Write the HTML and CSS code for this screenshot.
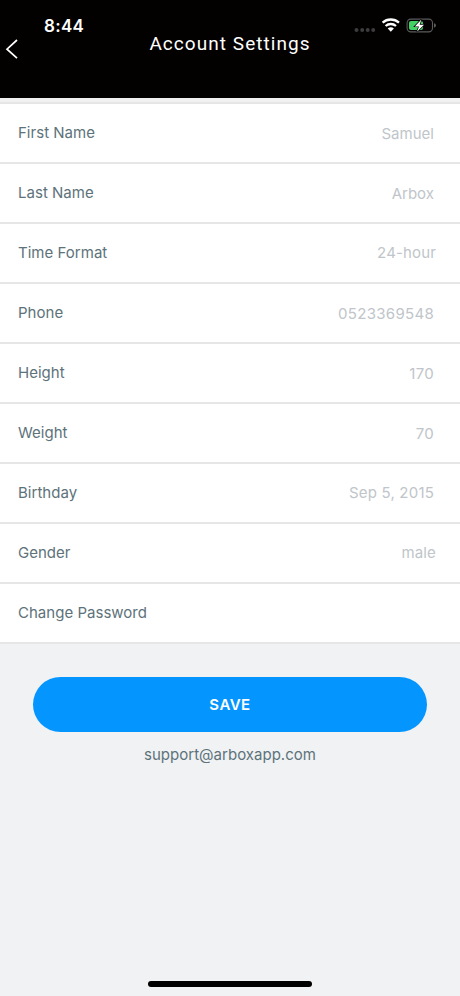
FILE: index.html
```html
<!DOCTYPE html>
<html lang="en">
<head>
<meta charset="utf-8">
<title>Account Settings</title>
<link rel="stylesheet" href="styles.css">
</head>
<body>
<header class="header">
  <div class="side">
    <time class="clock">8:44</time>
    <svg class="back" width="14" height="20" viewBox="0 0 14 20"><path d="M12 1 2 10.2 12 19.2" /></svg>
  </div>
  <h1 class="title">Account Settings</h1>
  <svg class="status" width="86" height="18" viewBox="0 0 86 18">
    <g fill="#3c3c3c"><circle cx="6.5" cy="13" r="2"/><circle cx="12.2" cy="13" r="2"/><circle cx="17.7" cy="13" r="2"/><circle cx="23.2" cy="13" r="2"/></g>
    <g fill="none" stroke="#fff" stroke-width="2.3"><path d="M32.6 5.600a12.4 12.4 0 0 1 16.4 0"/><path d="M35.6 9a7.7 7.7 0 0 1 10.4 0"/></g>
    <path d="M37.7 11.600a4.8 4.8 0 0 1 6.2 0L40.8 14.8z" fill="#fff"/>
    <rect x="57.1" y="2.1" width="25.4" height="12.8" rx="3.8" fill="none" stroke="#5c5c5c" stroke-width="1.1"/>
    <path d="M84 6.3q2 .6 2 2.2t-2 2.2z" fill="#5c5c5c"/>
    <rect x="59" y="3.9" width="14" height="9.2" rx="2" fill="#44cf65"/>
    <path d="M71.4 2.4 64.8 9.400H69L67 14.8 74 7.700H69.600z" fill="#fff" stroke="#000" stroke-width="1.4" paint-order="stroke"/>
  </svg>
</header>
<main>
  <ul class="list">
    <li class="row"><span>First Name</span><span class="value input">Samuel</span></li>
    <li class="row"><span>Last Name</span><span class="value input">Arbox</span></li>
    <li class="row"><span>Time Format</span><span class="value picker">24-hour</span></li>
    <li class="row"><span>Phone</span><span class="value input number">0523369548</span></li>
    <li class="row"><span>Height</span><span class="value input number">170</span></li>
    <li class="row"><span>Weight</span><span class="value input number">70</span></li>
    <li class="row"><span>Birthday</span><span class="value date">Sep 5, 2015</span></li>
    <li class="row"><span>Gender</span><span class="value picker">male</span></li>
    <li class="row"><span>Change Password</span></li>
  </ul>
  <button class="save" type="button">SAVE</button>
  <p class="support">support@arboxapp.com</p>
</main>
<div class="home-bar"></div>
</body>
</html>
```
FILE: styles.css
```css
* { box-sizing: border-box; }
body {
  margin: 0;
  height: 996px;
  display: flex;
  flex-direction: column;
  background: #f0f2f4;
  color: #5d727a;
  font: 15px/20px Inter, "Liberation Sans", sans-serif;
  letter-spacing: 0.02px;
}
.header {
  height: 98px;
  display: grid;
  grid-template-columns: 130px 1fr 130px;
  background: #030000;
  color: #fff;
}
.clock {
  display: block;
  margin: 16px 0 0 44px;
  font-size: 17px;
  font-weight: 600;
  letter-spacing: 0.3px;
}
.back {
  display: block;
  margin: 3px 0 0 5px;
  fill: none;
  stroke: #fff;
  stroke-width: 1.7;
}
.title {
  margin: 32px 0 0;
  text-align: center;
  font: 400 19px/24px Roboto, sans-serif;
  letter-spacing: 1.05px;
  white-space: nowrap;
}
.status { margin: 17px 0 0 20px; }
main { flex: 1; }
.list {
  list-style: none;
  margin: 0;
  padding: 0;
  border-top: 4px solid #f1f1f1;
}
.row {
  height: 60px;
  padding: 0 26px 0 18px;
  display: flex;
  justify-content: space-between;
  align-items: center;
  background: #fff;
  border-bottom: 2px solid #e6e6e6;
}
.row:first-child { height: 62px; border-top: 2px solid #e6e6e6; }
.value { color: #c0c5ca; }
.input { padding-top: 2px; }
.picker { margin-right: -2px; letter-spacing: 0.15px; }
.number { letter-spacing: 0.3px; }
.date { letter-spacing: 0.2px; }
.save {
  display: block;
  width: 394px;
  height: 55px;
  margin: 33px auto 0;
  border: 0;
  border-radius: 28px;
  background: #0595ff;
  color: #fff;
  font: 600 15px/20px Inter, sans-serif;
  letter-spacing: 0.5px;
}
.support { margin: 13px 0 0; text-align: center; }
.home-bar {
  width: 164px;
  height: 6px;
  margin: 0 auto 9px;
  border-radius: 3px;
  background: #000;
}
```
